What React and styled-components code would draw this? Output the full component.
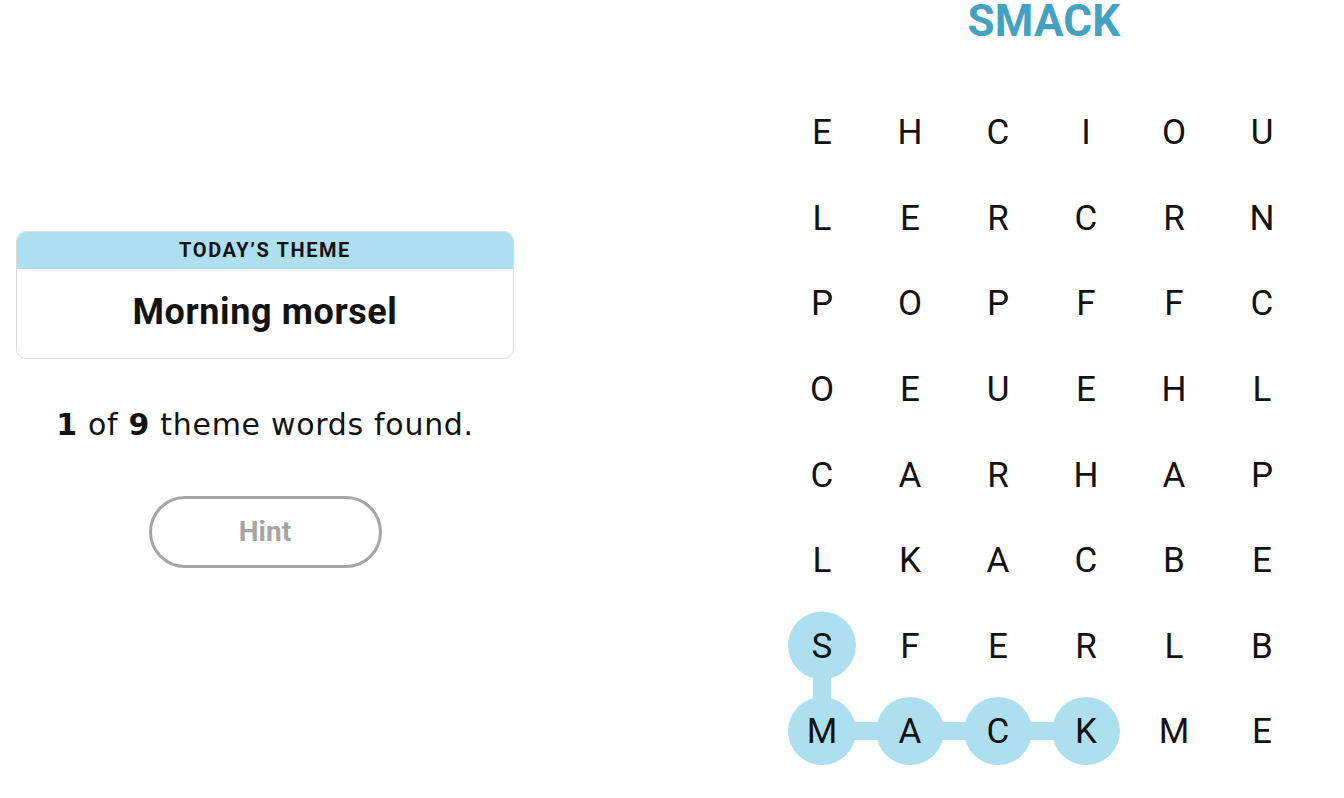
import React from "react";
import styled, { createGlobalStyle } from "styled-components";

const Global = createGlobalStyle`
  html, body { margin: 0; padding: 0; background: #ffffff; }
  body { font-family: Roboto, "Liberation Sans", sans-serif; color: #121212; }
`;

const Page = styled.div`
  display: flex;
  align-items: stretch;
  height: 798px;
  padding-left: 16px;
  gap: 264px;
  overflow: hidden;
`;

const Side = styled.aside`
  width: 498px;
  display: flex;
  flex-direction: column;
  align-items: center;
  justify-content: center;
`;

const ThemeCard = styled.section`
  width: 100%;
  box-sizing: border-box;
  border: 1px solid #dcdcdc;
  border-radius: 10px;
  overflow: hidden;
`;

const ThemeHeader = styled.div`
  background: #aedfee;
  height: 38px;
  display: flex;
  align-items: center;
  justify-content: center;
  font-size: 20px;
  font-weight: 700;
  letter-spacing: 1.6px;
  text-transform: uppercase;
  color: #121212;
  margin: -1px -1px 0;
`;

const ThemeBody = styled.div`
  height: 89px;
  display: flex;
  align-items: center;
  justify-content: center;
  font-size: 36px;
  font-weight: 700;
  letter-spacing: 0.6px;
  padding-bottom: 2px;
  box-sizing: border-box;
`;

const Progress = styled.p`
  margin: 48px 0 0;
  font-family: "DejaVu Sans", "Liberation Sans", sans-serif;
  font-size: 30px;
  line-height: 36px;
  font-weight: 400;
  letter-spacing: 0.7px;
  color: #121212;
  b { font-weight: 700; }
`;

const HintButton = styled.button`
  margin-top: 53px;
  width: 233px;
  height: 72px;
  border-radius: 36px;
  border: 3px solid #a5a5a5;
  background: #fff;
  color: #a5a5a5;
  font-family: inherit;
  font-size: 28px;
  font-weight: 700;
  cursor: default;
`;

const Board = styled.main`
  width: 528px;
  display: flex;
  flex-direction: column;
  align-items: center;
`;

const Current = styled.h1`
  margin: 0;
  padding: 1px 0 0 4px;
  font-size: 44px;
  line-height: 40px;
  height: 40px;
  font-weight: 700;
  color: #43a1c1;
  letter-spacing: 0.2px;
`;

const GridWrap = styled.div`
  position: relative;
  margin-top: 49px;
  width: 528px;
  height: 685px;
`;

const Trail = styled.svg`
  position: absolute;
  inset: 0;
  z-index: 0;
`;

const Grid = styled.div`
  position: relative;
  z-index: 1;
  display: grid;
  grid-template-columns: repeat(6, 88px);
  grid-auto-rows: 85.6px;
`;

const Cell = styled.div`
  display: flex;
  align-items: center;
  justify-content: center;
  font-size: 35px;
  font-weight: 400;
  color: #121212;
`;

const rows = [
  "EHCIOU",
  "LERCRN",
  "POPFFC",
  "OEUEHL",
  "CARHAP",
  "LKACBE",
  "SFERLB",
  "MACKME",
];

const path = [
  [6, 0],
  [7, 0],
  [7, 1],
  [7, 2],
  [7, 3],
];

const cx = (c) => 44 + 88 * c;
const cy = (r) => 41.8 + 85.6 * r;

export default function App() {
  const pts = path.map(([r, c]) => `${cx(c)},${cy(r)}`).join(" ");
  return (
    <>
      <Global />
      <Page>
        <Side>
          <ThemeCard>
            <ThemeHeader>Today’s theme</ThemeHeader>
            <ThemeBody>Morning morsel</ThemeBody>
          </ThemeCard>
          <Progress>
            <b>1</b> of <b>9</b> theme words found.
          </Progress>
          <HintButton>Hint</HintButton>
        </Side>
        <Board>
          <Current>SMACK</Current>
          <GridWrap>
            <Trail width="528" height="685" viewBox="0 0 528 685">
              <polyline
                points={pts}
                fill="none"
                stroke="#aedfee"
                strokeWidth="18"
              />
              {path.map(([r, c]) => (
                <circle key={`${r}-${c}`} cx={cx(c)} cy={cy(r)} r="34" fill="#aedfee" />
              ))}
            </Trail>
            <Grid>
              {rows.map((row, r) =>
                row.split("").map((ch, c) => <Cell key={`${r}-${c}`}>{ch}</Cell>)
              )}
            </Grid>
          </GridWrap>
        </Board>
      </Page>
    </>
  );
}
